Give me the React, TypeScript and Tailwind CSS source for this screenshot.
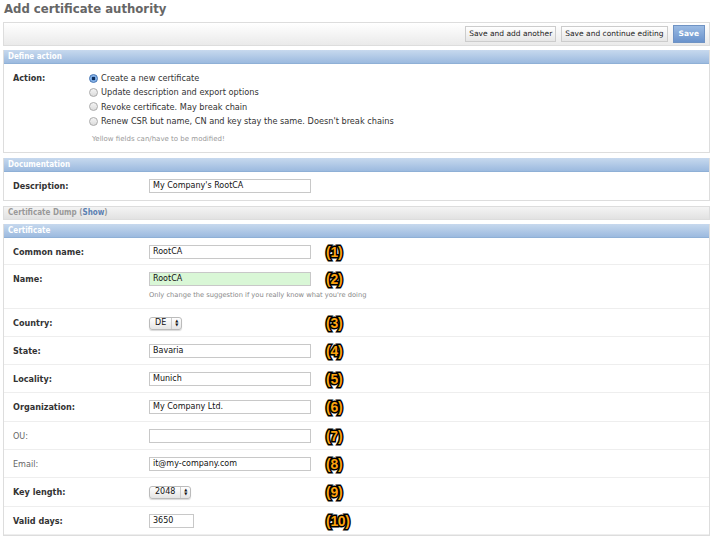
import React from 'react'

const font = { fontFamily: '"DejaVu Sans", Verdana, sans-serif' }
const cond = '[font-family:"DejaVu_Sans_Condensed","DejaVu_Sans",sans-serif]'

function Header({ title }: { title: string }) {
  return (
    <div
      className={`h-[14px] border-b border-[#8fb0d6] bg-gradient-to-b from-[#c7d9ee] to-[#9cbadf] px-[4px] text-[8px] font-bold leading-[13px] text-white ${cond}`}
    >
      {title}
    </div>
  )
}

function Badge({ n }: { n: number }) {
  return (
    <span className="text-[14px] leading-[16px] font-bold tracking-[-0.3px] text-[#fba30d] [font-family:'Liberation_Sans',Arial,sans-serif] [-webkit-text-stroke:3px_#000] [paint-order:stroke_fill] [text-shadow:0_0_2px_#000]">
      ({n})
    </span>
  )
}

function TextInput({ value, w = 'w-[162px]', green }: { value: string; w?: string; green?: boolean }) {
  return (
    <div
      className={`h-[14px] ${w} border border-[#c8c8c8] ${green ? 'bg-[#d9f7d6]' : 'bg-white'} px-[3px] text-[8px] leading-[12px] text-[#111]`}
    >
      {value}
    </div>
  )
}

function Select({ value }: { value: string }) {
  return (
    <div className="flex h-[13px] items-center rounded-[3px] border border-[#bbb] bg-gradient-to-b from-white to-[#e4e4e4] text-[8px] text-[#111] shadow-[0_1px_1px_rgba(0,0,0,0.15)]">
      <span className="px-[5px]">{value}</span>
      <span className="flex h-full flex-col items-center justify-center border-l border-[#ccc] px-[3px] text-[4px] leading-[4px]">
        <span>▲</span>
        <span>▼</span>
      </span>
    </div>
  )
}

type Row = {
  label: string
  bold?: boolean
  field: React.ReactNode
  help?: string
  n: number
  h?: string
}

function FormRow({ row }: { row: Row }) {
  return (
    <div className={`flex ${row.h ?? 'h-[28px]'} border-b border-[#eee] px-[9px] pt-[7px]`}>
      <div
        className={`w-[136px] text-[9px] leading-[14px] ${cond} ${row.bold === false ? 'text-[#666]' : 'font-bold text-[#333]'}`}
      >
        {row.label}
      </div>
      <div className="flex flex-col">
        <div className="flex h-[14px] items-center">
          <div className="w-[177px]">{row.field}</div>
          <Badge n={row.n} />
        </div>
        {row.help && <div className="mt-[4px] text-[6.7px] leading-[10px] text-[#888]">{row.help}</div>}
      </div>
    </div>
  )
}

const rows: Row[] = [
  { label: 'Common name:', field: <TextInput value="RootCA" />, n: 1, h: 'h-[27px] pt-[6px]' },
  {
    label: 'Name:',
    field: <TextInput value="RootCA" green />,
    help: "Only change the suggestion if you really know what you're doing",
    n: 2,
    h: 'h-[44px]',
  },
  { label: 'Country:', field: <div className="flex"><Select value="DE" /></div>, n: 3 },
  { label: 'State:', field: <TextInput value="Bavaria" />, n: 4 },
  { label: 'Locality:', field: <TextInput value="Munich" />, n: 5 },
  { label: 'Organization:', field: <TextInput value="My Company Ltd." />, n: 6, h: 'h-[29px]' },
  { label: 'OU:', bold: false, field: <TextInput value="" />, n: 7 },
  { label: 'Email:', bold: false, field: <TextInput value="it@my-company.com" />, n: 8 },
  { label: 'Key length:', field: <div className="flex"><Select value="2048" /></div>, n: 9, h: 'h-[29px]' },
  { label: 'Valid days:', field: <TextInput value="3650" w="w-[45px]" />, n: 10 },
]

const actions = [
  'Create a new certificate',
  'Update description and export options',
  'Revoke certificate. May break chain',
  "Renew CSR but name, CN and key stay the same. Doesn't break chains",
]

export default function App() {
  return (
    <div className="h-[537px] w-[713px] overflow-hidden bg-white text-[#333]" style={font}>
      <h1 className={`px-[4px] text-[13px] font-bold leading-[18px] text-[#666] ${cond}`}>Add certificate authority</h1>

      <div className="mx-[3px] mt-[4px] flex h-[24px] items-center justify-end gap-[5px] border border-[#ddd] bg-gradient-to-b from-white to-[#eaeaea] pr-[4px]">
        <button className="h-[16px] border border-[#ccc] bg-gradient-to-b from-white to-[#e6e6e6] px-[3px] text-[7.5px] leading-[14px] text-[#222]">
          Save and add another
        </button>
        <button className="h-[16px] border border-[#ccc] bg-gradient-to-b from-white to-[#e6e6e6] px-[3px] text-[7.5px] leading-[14px] text-[#222]">
          Save and continue editing
        </button>
        <button className="h-[18px] border border-[#6f93c4] bg-gradient-to-b from-[#9bbbe3] to-[#6a93cc] px-[5px] text-[7.5px] font-bold leading-[16px] text-white">
          Save
        </button>
      </div>

      <div className="mx-[3px] mt-[4px] border border-t-0 border-[#ddd]">
        <Header title="Define action" />
        <div className="flex px-[9px] pt-[7px]">
          <div className={`w-[76px] pt-[1px] text-[9px] font-bold leading-[12px] ${cond}`}>Action:</div>
          <div className="flex flex-col">
            {actions.map((a, i) => (
              <div key={a} className="flex h-[14.3px] items-center gap-[3px] text-[8.2px] text-[#333]">
                <span
                  className={`inline-block h-[9px] w-[9px] rounded-full border ${i === 0 ? 'border-[#3b6fb3] bg-[radial-gradient(circle,#0e2e5c_0,#0e2e5c_1.5px,#6fa2e0_2px,#b9d4f2_4.5px)]' : 'border-[#aaa] bg-gradient-to-b from-[#f4f4f4] to-[#dcdcdc]'}`}
                />
                {a}
              </div>
            ))}
          </div>
        </div>
        <div className="pb-[8px] pl-[88px] pt-[6px] text-[7px] leading-[10px] text-[#999]">Yellow fields can/have to be modified!</div>
      </div>

      <div className="mx-[3px] mt-[5px] border border-t-0 border-[#ddd]">
        <Header title="Documentation" />
        <div className="flex h-[28px] px-[9px] pt-[7px]">
          <div className={`w-[136px] text-[9px] font-bold leading-[14px] ${cond}`}>Description:</div>
          <TextInput value="My Company's RootCA" />
        </div>
      </div>

      <div
        className={`mx-[3px] mt-[5px] h-[14px] border border-[#ddd] bg-gradient-to-b from-[#f4f4f4] to-[#e2e2e2] px-[4px] text-[8px] font-bold leading-[12px] text-[#999] ${cond}`}
      >
        Certificate Dump (<span className="text-[#5b80b2]">Show</span>)
      </div>

      <div className="mx-[3px] mt-[4px] border border-t-0 border-[#ddd]">
        <Header title="Certificate" />
        {rows.map((r) => (
          <FormRow key={r.label} row={r} />
        ))}
      </div>
    </div>
  )
}
